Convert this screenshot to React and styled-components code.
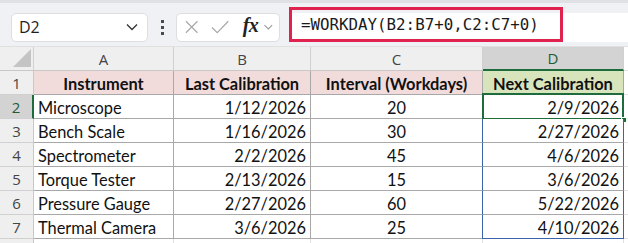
import React from 'react';
import styled, { createGlobalStyle } from 'styled-components';

const GlobalStyle = createGlobalStyle`
  html, body {
    margin: 0;
    padding: 0;
    background: #ffffff;
  }
  * {
    box-sizing: border-box;
  }
`;

const columns = ['A', 'B', 'C', 'D'];

const rows = [
  ['Microscope', '1/12/2026', '20', '2/9/2026'],
  ['Bench Scale', '1/16/2026', '30', '2/27/2026'],
  ['Spectrometer', '2/2/2026', '45', '4/6/2026'],
  ['Torque Tester', '2/13/2026', '15', '3/6/2026'],
  ['Pressure Gauge', '2/27/2026', '60', '5/22/2026'],
  ['Thermal Camera', '3/6/2026', '25', '4/10/2026'],
];

const headers = ['Instrument', 'Last Calibration', 'Interval (Workdays)', 'Next Calibration'];
const aligns = ['left', 'right', 'center', 'right'];

const App = () => {
  return (
    <Page>
      <GlobalStyle />
      <Toolbar>
        <NameBox>
          <NameText>D2</NameText>
          <svg width="12" height="8" viewBox="0 0 12 8">
            <path d="M1 1.5 L6 6.5 L11 1.5" fill="none" stroke="#333" strokeWidth="1.3" />
          </svg>
        </NameBox>
        <Dots>
          <Dot />
          <Dot />
          <Dot />
        </Dots>
        <FxBox>
          <svg width="14" height="14" viewBox="0 0 14 14">
            <path d="M1 1 L13 13 M13 1 L1 13" stroke="#a8a8a8" strokeWidth="1.2" />
          </svg>
          <svg width="19" height="14" viewBox="0 0 19 14">
            <path d="M1 7.5 L6.5 13 L18 1" fill="none" stroke="#a8a8a8" strokeWidth="1.2" />
          </svg>
          <FxLabel>fx</FxLabel>
          <svg width="9" height="6" viewBox="0 0 9 6">
            <path d="M0.5 1 L4.5 5 L8.5 1" fill="none" stroke="#9a9a9a" strokeWidth="1.1" />
          </svg>
        </FxBox>
        <FormulaBar>
          <Highlight>=WORKDAY(B2:B7+0,C2:C7+0)</Highlight>
        </FormulaBar>
      </Toolbar>

      <Sheet>
        <Corner>
          <svg width="18" height="18" viewBox="0 0 18 18">
            <path d="M18 0 L18 18 L0 18 Z" fill="#c4c4c4" />
          </svg>
        </Corner>
        {columns.map((c) => (
          <ColHeader key={c} $selected={c === 'D'}>{c}</ColHeader>
        ))}
        <Filler />

        <RowHeader>1</RowHeader>
        {headers.map((h, i) => (
          <TitleCell key={h} $green={i === 3}>{h}</TitleCell>
        ))}
        <Filler />

        {rows.map((r, ri) => (
          <React.Fragment key={ri}>
            <RowHeader $selected={ri === 0}>{ri + 2}</RowHeader>
            {r.map((v, ci) => (
              <Cell
                key={ci}
                $align={aligns[ci]}
                $spill={ci === 3}
                $spillLast={ci === 3 && ri === rows.length - 1}
              >
                {v}
                {ci === 3 && ri === 0 && (
                  <>
                    <ActiveFrame />
                    <Handle />
                  </>
                )}
              </Cell>
            ))}
            <Filler />
          </React.Fragment>
        ))}

        <RowHeader />
        <EmptyCell />
        <EmptyCell />
        <EmptyCell />
        <EmptyCell />
        <Filler />
      </Sheet>
    </Page>
  );
};

const Page = styled.div`
  width: 628px;
  height: 243px;
  overflow: hidden;
  font-family: 'Open Sans', 'Liberation Sans', sans-serif;
  background: #ffffff;
`;

const Toolbar = styled.div`
  height: 47px;
  display: flex;
  align-items: center;
  padding: 0 0 0 11px;
  background: #eff1f4;
  border-top: 3px solid #dfe1e4;
  border-bottom: 1px solid #e0e0e0;
`;

const NameBox = styled.div`
  width: 137px;
  height: 29px;
  display: flex;
  align-items: center;
  justify-content: space-between;
  padding: 0 9px 0 7px;
  background: #ffffff;
  border: 1px solid #dedede;
  border-radius: 5px;
  margin-top: 5px;
`;

const NameText = styled.span`
  font-size: 16px;
  color: #1f1f1f;
`;

const Dots = styled.div`
  display: flex;
  flex-direction: column;
  gap: 3px;
  margin: 5px 12px 0 13px;
`;

const Dot = styled.span`
  width: 3px;
  height: 3px;
  background: #4a4a4a;
`;

const FxBox = styled.div`
  width: 104px;
  height: 29px;
  display: flex;
  align-items: center;
  padding: 0 6px 0 8px;
  background: #ffffff;
  border: 1px solid #dedede;
  border-radius: 5px;
  margin-top: 5px;

  & > svg:nth-child(2) {
    margin-left: 13px;
  }
`;

const FxLabel = styled.span`
  font-family: 'Liberation Serif', 'DejaVu Serif', serif;
  font-style: italic;
  font-weight: 700;
  font-size: 20px;
  color: #222;
  margin: -3px 6px 0 13px;
  letter-spacing: -0.5px;
`;

const FormulaBar = styled.div`
  flex: 1;
  height: 29px;
  display: flex;
  align-items: center;
  margin: 5px 0 0 9px;
  background: #ffffff;
  border-radius: 5px 0 0 5px;
`;

const Highlight = styled.div`
  height: 35px;
  width: 274px;
  display: flex;
  align-items: center;
  padding: 0 0 1px 9px;
  margin: -5px 0 0 0;
  border: 3px solid #e0224f;
  font-family: 'DejaVu Sans Mono', 'Liberation Mono', monospace;
  font-size: 15.8px;
  color: #1a1a1a;
  white-space: nowrap;
`;

const Sheet = styled.div`
  display: grid;
  grid-template-columns: 34px 140px 137px 172px 141px 1fr;
  grid-auto-rows: 24px;
  font-family: 'Lato', 'Liberation Sans', sans-serif;
  font-size: 16.4px;
  color: #111;
`;

const Corner = styled.div`
  display: flex;
  align-items: flex-end;
  justify-content: flex-end;
  padding: 0 2px 3px 0;
  background: #efefef;
  border-right: 1px solid #d0d0d0;
  border-bottom: 1px solid #c8c8c8;
`;

const ColHeader = styled.div`
  display: flex;
  align-items: center;
  justify-content: center;
  font-family: 'Open Sans', 'Liberation Sans', sans-serif;
  font-size: 15px;
  color: ${(p) => (p.$selected ? '#1e5c38' : '#444')};
  background: ${(p) => (p.$selected ? '#d3d3d3' : '#efefef')};
  border-right: 1px solid #d0d0d0;
  border-bottom: ${(p) => (p.$selected ? '2px solid #1e6b3c' : '1px solid #c8c8c8')};
`;

const RowHeader = styled.div`
  display: flex;
  align-items: center;
  justify-content: center;
  font-family: 'Open Sans', 'Liberation Sans', sans-serif;
  font-size: 15px;
  color: ${(p) => (p.$selected ? '#1e5c38' : '#444')};
  background: ${(p) => (p.$selected ? '#d3d3d3' : '#efefef')};
  border-right: ${(p) => (p.$selected ? '2px solid #1e6b3c' : '1px solid #c8c8c8')};
  border-bottom: 1px solid #d0d0d0;
`;

const Filler = styled.div`
  background: #ffffff;
  border-bottom: 1px solid #e4e4e4;
`;

const TitleCell = styled.div`
  display: flex;
  align-items: center;
  justify-content: center;
  padding-top: 1px;
  font-weight: 700;
  white-space: nowrap;
  background: ${(p) => (p.$green ? '#d8e4bc' : '#f2dcdb')};
  border-right: 1px solid #a8a8a8;
  border-bottom: 1px solid #a8a8a8;
`;

const Cell = styled.div`
  position: relative;
  display: flex;
  align-items: center;
  justify-content: ${(p) =>
    p.$align === 'left' ? 'flex-start' : p.$align === 'right' ? 'flex-end' : 'center'};
  padding: 1px 4px 0;
  white-space: nowrap;
  background: #ffffff;
  border-right: 1px solid ${(p) => (p.$spill ? '#3b64ad' : '#a8a8a8')};
  border-bottom: 1px solid ${(p) => (p.$spillLast ? '#3b64ad' : '#a8a8a8')};
  border-left: ${(p) => (p.$spill ? '1px solid #3b64ad' : 'none')};
  margin-left: ${(p) => (p.$spill ? '-1px' : '0')};
`;

const ActiveFrame = styled.div`
  position: absolute;
  inset: -2px -1px -2px -1px;
  border: 2px solid #1e6b3c;
  pointer-events: none;
`;

const Handle = styled.div`
  position: absolute;
  right: -4px;
  bottom: -5px;
  width: 6px;
  height: 6px;
  background: #1e6b3c;
  border: 1px solid #ffffff;
`;

const EmptyCell = styled.div`
  background: #ffffff;
  border-right: 1px solid #e0e0e0;
  border-bottom: 1px solid #e0e0e0;
`;

export default App;
